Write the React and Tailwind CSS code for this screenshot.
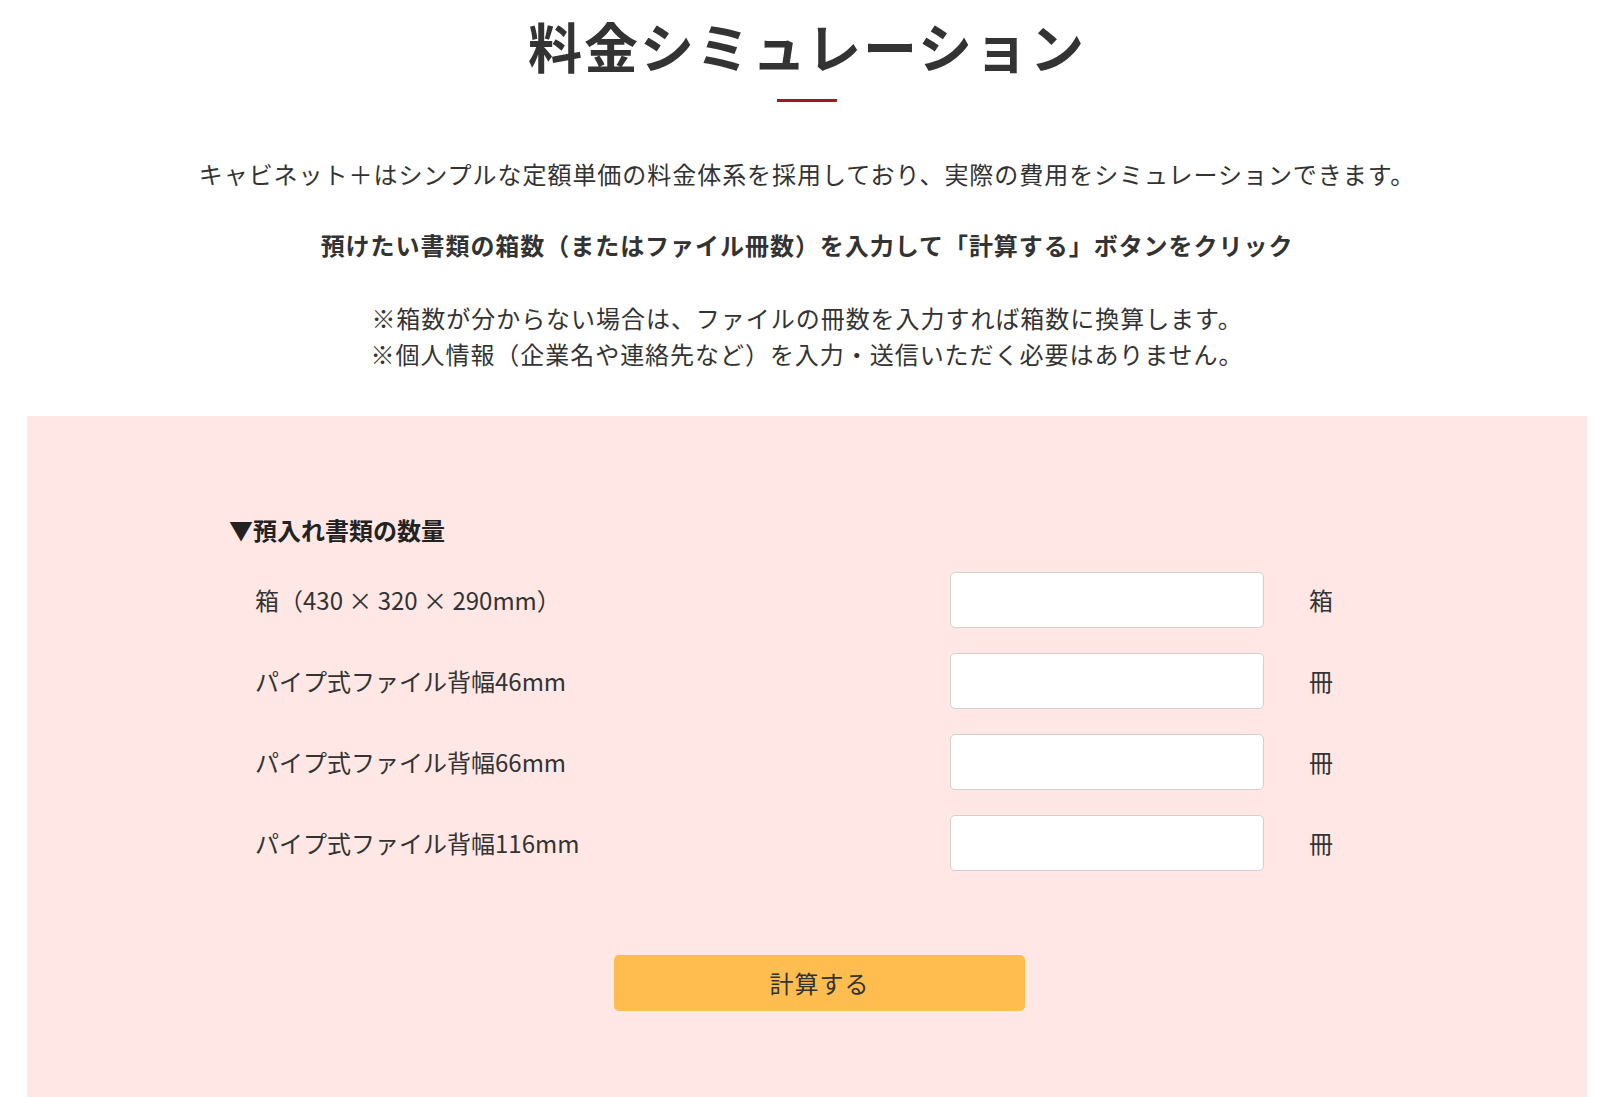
import React from "react";

const rows = [
  { label: "箱（430 × 320 × 290mm）", unit: "箱" },
  { label: "パイプ式ファイル背幅46mm", unit: "冊" },
  { label: "パイプ式ファイル背幅66mm", unit: "冊" },
  { label: "パイプ式ファイル背幅116mm", unit: "冊" },
];

export default function App() {
  return (
    <div
      className="min-h-[1097px] bg-white pl-[27px] pr-[10px] text-[#333333]"
      style={{ fontFamily: '"Noto Sans CJK JP", "Noto Sans", sans-serif' }}
    >
      <div className="flex flex-col items-center">
        <h1 className="pt-[19px] text-[54px] font-bold leading-none tracking-[2px] text-[#333333]">
          料金シミュレーション
        </h1>
        <div className="mt-[26px] h-[3px] w-[60px] bg-[#a8151d]" />
        <p className="mt-[54px] text-[24px] leading-[36px] tracking-[0.04em]">
          キャビネット＋はシンプルな定額単価の料金体系を採用しており、実際の費用をシミュレーションできます。
        </p>
        <p className="mt-[35px] text-[24px] font-bold leading-[36px] tracking-[0.04em]">
          預けたい書類の箱数（またはファイル冊数）を入力して「計算する」ボタンをクリック
        </p>
        <div className="mt-[37px] text-center text-[24px] leading-[36px] tracking-[0.04em]">
          <p>※箱数が分からない場合は、ファイルの冊数を入力すれば箱数に換算します。</p>
          <p>※個人情報（企業名や連絡先など）を入力・送信いただく必要はありません。</p>
        </div>
      </div>

      <div className="mt-[44px] bg-[#ffe7e6] pb-[110px] pl-[202px] pt-[96px]">
        <h2 className="text-[24px] font-bold leading-[36px] text-[#222222]">▼預入れ書類の数量</h2>
        <div className="mt-[24px] flex flex-col gap-[25px] pl-[26px]">
          {rows.map((r) => (
            <div key={r.label} className="flex items-center">
              <div className="w-[695px] text-[24px] leading-[36px]">{r.label}</div>
              <input
                type="text"
                className="h-[56px] w-[314px] rounded-[5px] border border-[#d6cfcf] bg-white px-3 text-[22px] outline-none"
              />
              <div className="ml-[45px] text-[24px] leading-[36px]">{r.unit}</div>
            </div>
          ))}
        </div>
        <button
          type="button"
          className="ml-[385px] mt-[84px] flex h-[56px] w-[411px] items-center justify-center rounded-[5px] bg-[#ffbd4f] text-[24px] tracking-[0.04em] text-[#333333]"
        >
          計算する
        </button>
      </div>
    </div>
  );
}
